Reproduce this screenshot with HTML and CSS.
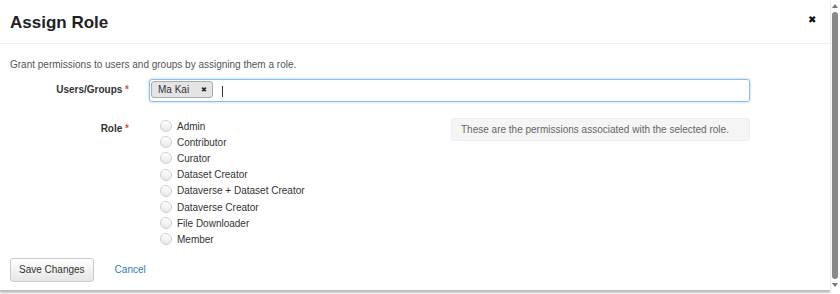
FILE: index.html
```html
<!DOCTYPE html>
<html lang="en">
<head>
    <meta charset="UTF-8">
    <title>Assign Role</title>
    <link rel="stylesheet" href="styles.css">
</head>
<body>

    <div class="page">
        <div class="modal">
            <div class="modal-header">
                <h2>Assign Role</h2>
                <span class="close">&#10006;</span>
            </div>

            <div class="modal-body">
                <p class="intro">Grant permissions to users and groups by assigning them a role.</p>

                <div class="form-row">
                    <label class="form-label">Users/Groups <span class="req">*</span></label>
                    <div class="tag-input">
                        <span class="tag">Ma Kai <span class="tag-x">&#10006;</span></span>
                        <span class="caret"></span>
                    </div>
                </div>

                <div class="form-row role-row">
                    <label class="form-label">Role <span class="req">*</span></label>
                    <div class="role-list">
                        <label class="radio"><span class="dot"></span>Admin</label>
                        <label class="radio"><span class="dot"></span>Contributor</label>
                        <label class="radio"><span class="dot"></span>Curator</label>
                        <label class="radio"><span class="dot"></span>Dataset Creator</label>
                        <label class="radio"><span class="dot"></span>Dataverse + Dataset Creator</label>
                        <label class="radio"><span class="dot"></span>Dataverse Creator</label>
                        <label class="radio"><span class="dot"></span>File Downloader</label>
                        <label class="radio"><span class="dot"></span>Member</label>
                    </div>
                    <div class="role-info">These are the permissions associated with the selected role.</div>
                </div>
            </div>

            <div class="modal-footer">
                <button class="btn">Save Changes</button>
                <a class="cancel" href="#">Cancel</a>
            </div>
        </div>

        <div class="scrollbar">
            <span class="arrow up"></span>
            <span class="thumb"></span>
            <span class="arrow down"></span>
        </div>
    </div>

</body>
</html>
```

FILE: styles.css
```css
body {
    margin: 0;
    font-family: "Liberation Sans", Arial, sans-serif;
    font-size: 10px;
    color: #333;
    background: #fff;
}

.page {
    display: flex;
    height: 294px;
    overflow: hidden;
}

.modal {
    flex: 1;
    height: 290px;
    background: #fff;
    border-bottom: 1px solid #bbb;
    box-shadow: 0 2px 2px rgba(0, 0, 0, 0.25);
}

.modal-header {
    display: flex;
    align-items: center;
    justify-content: space-between;
    height: 43px;
    padding: 0 14px 0 10px;
    border-bottom: 1px solid #eee;
}

.modal-header h2 {
    margin: 3px 0 0 0;
    font-size: 17px;
    font-weight: bold;
    color: #222;
}

.close {
    font-size: 10px;
    color: #111;
    margin-bottom: 4px;
}

.modal-body {
    padding: 0 10px;
}

.intro {
    margin: 14px 0 0 0;
    color: #555;
    line-height: 13px;
}

.form-row {
    display: flex;
    align-items: flex-start;
    margin-top: 8px;
}

.form-label {
    width: 119px;
    text-align: right;
    font-weight: bold;
    color: #333;
    padding-top: 5px;
    margin-right: 20px;
}

.req {
    color: #d9534f;
}

.tag-input {
    display: flex;
    align-items: flex-start;
    width: 597px;
    height: 19px;
    border: 1px solid #8fbde6;
    border-radius: 3px;
    box-shadow: 0 0 3px rgba(102, 175, 233, 0.6);
    padding: 1px;
}

.tag {
    display: flex;
    align-items: center;
    height: 15px;
    padding: 0 5px 0 6px;
    background: #e4e4e4;
    border: 1px solid #aaa;
    border-radius: 3px;
    color: #333;
}

.tag-x {
    font-size: 7px;
    margin-left: 12px;
    color: #222;
}

.caret {
    width: 1px;
    height: 11px;
    background: #333;
    margin: 5px 0 0 9px;
}

.role-row {
    margin-top: 16px;
}

.role-list {
    display: flex;
    flex-direction: column;
    width: 291px;
    padding-left: 11px;
}

.radio {
    display: flex;
    align-items: center;
    height: 16.2px;
    color: #333;
}

.dot {
    width: 10px;
    height: 10px;
    border: 1px solid #cfcfcf;
    border-radius: 50%;
    background: linear-gradient(#fff, #e8e8e8);
    margin-right: 5px;
}

.role-info {
    width: 279px;
    padding: 4px 9px;
    line-height: 13px;
    background: #f5f5f5;
    border: 1px solid #eee;
    border-radius: 3px;
    color: #666;
}

.modal-footer {
    display: flex;
    align-items: center;
    padding: 10px 10px 0 10px;
}

.btn {
    font-family: inherit;
    font-size: 10px;
    color: #333;
    height: 24px;
    padding: 0 8px;
    background: linear-gradient(#fff, #e6e6e6);
    border: 1px solid #ccc;
    border-radius: 3px;
}

.cancel {
    margin-left: 21px;
    color: #337ab7;
    text-decoration: none;
}

.scrollbar {
    display: flex;
    flex-direction: column;
    align-items: center;
    width: 10px;
    padding-top: 4px;
}

.arrow {
    width: 0;
    height: 0;
    border-left: 3px solid transparent;
    border-right: 3px solid transparent;
}

.arrow.up {
    border-bottom: 4px solid #777;
}

.arrow.down {
    border-top: 4px solid #777;
}

.thumb {
    width: 6px;
    height: 267px;
    margin: 4px 0;
    background: #8a8a8a;
    border-radius: 3px;
}
```
